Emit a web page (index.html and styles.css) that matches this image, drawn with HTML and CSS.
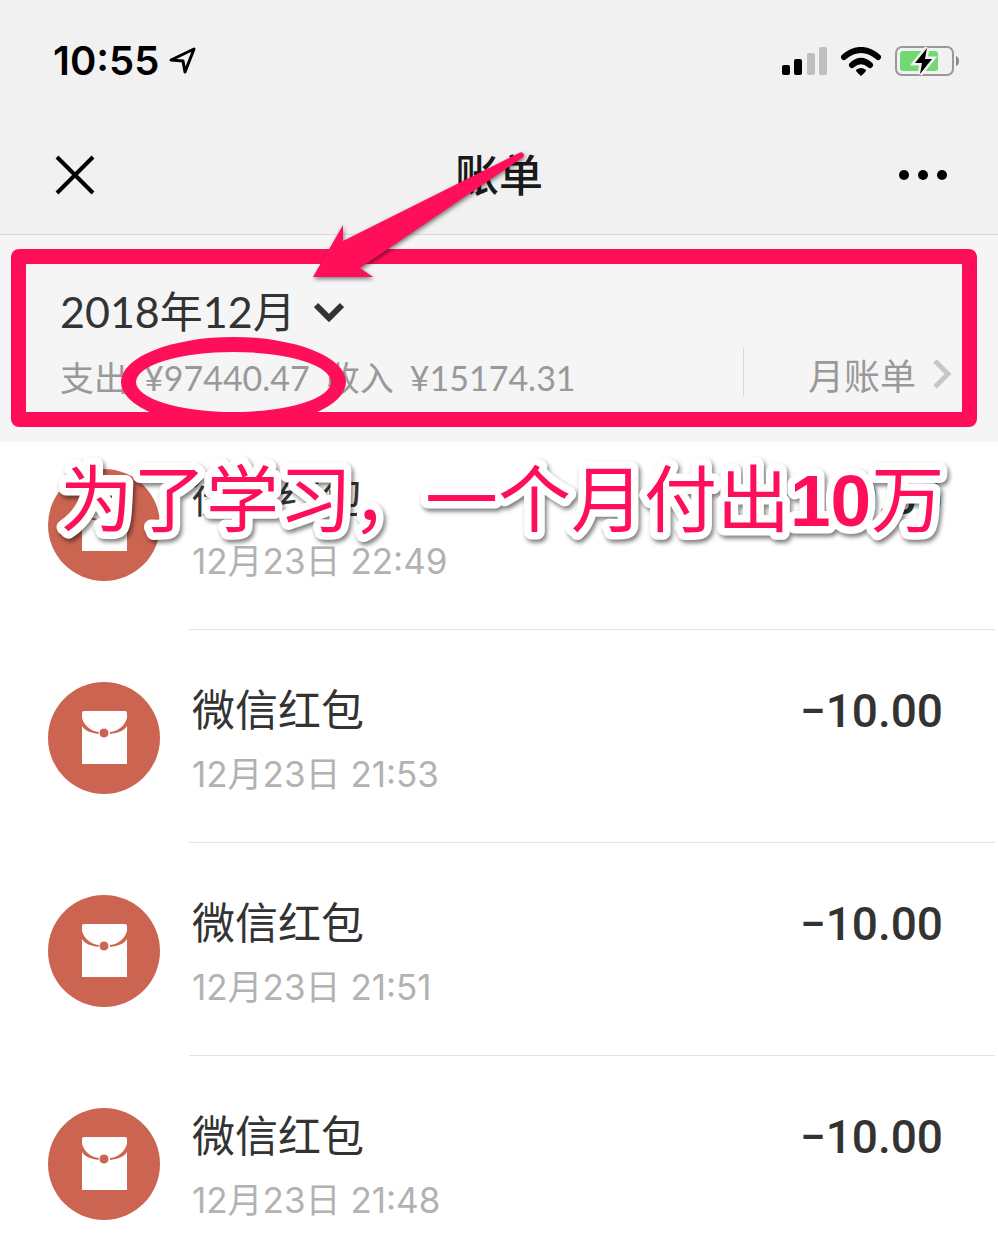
FILE: index.html
```html
<!DOCTYPE html>
<html lang="zh-CN">
<head>
    <meta charset="UTF-8">
    <meta name="viewport" content="width=device-width, initial-scale=1.0">
    <title>账单</title>
    <link rel="stylesheet" href="styles.css">
</head>
<body>
    <!-- envelope icon shared by all rows -->
    <svg class="defs" aria-hidden="true">
        <symbol id="envelope" viewBox="0 0 112 112">
            <circle cx="56" cy="56" r="56" fill="#cb6551"/>
            <path d="M36 29H77Q79 29 79 31V82H34V31Q34 29 36 29Z" fill="#fff"/>
            <path d="M34 36C36 43 42 49 51 50V52C43 51 37 49 34 44ZM79 36C77 43 71 49 62 50V52C70 51 76 49 79 44Z" fill="#cb6551"/>
            <circle cx="56" cy="51" r="5" fill="#cb6551" stroke="#fff" stroke-width="1"/>
        </symbol>
    </svg>

    <header class="header">
        <div class="status-bar">
            <div class="status-left">
                <span class="time">10:55</span>
                <svg width="28" height="28" viewBox="0 0 28 28">
                    <path d="M2 13L25 2 16 25 14 14Z" fill="none" stroke="#000" stroke-width="3" stroke-linejoin="round"/>
                </svg>
            </div>
            <div class="status-right">
                <svg width="46" height="28" viewBox="0 0 46 28">
                    <rect x="1" y="18" width="8" height="10" rx="2"/>
                    <rect x="13" y="12" width="8" height="16" rx="2"/>
                    <rect x="26" y="6" width="8" height="22" rx="2" fill="#bfbfbf"/>
                    <rect x="38" y="0" width="8" height="28" rx="2" fill="#bfbfbf"/>
                </svg>
                <svg width="40" height="29" viewBox="0 0 40 29">
                    <path d="M3 10Q20-4 37 10" fill="none" stroke="#000" stroke-width="6" stroke-linecap="round"/>
                    <path d="M11 18Q20 10 29 18" fill="none" stroke="#000" stroke-width="6" stroke-linecap="round"/>
                    <path d="M15 23Q20 19 25 23C26 24 20 29 20 29S14 24 15 23Z"/>
                </svg>
                <svg width="64" height="32" viewBox="0 0 64 32">
                    <rect x="1" y="2" width="57" height="28" rx="6" fill="none" stroke="#999" stroke-width="2"/>
                    <path d="M61 11q3 1 3 5t-3 5z" fill="#888"/>
                    <rect x="5" y="6" width="38" height="20" rx="3" fill="#73d872"/>
                    <path d="M32 3L20 18H27L25 29 37 14H30Z" stroke="#f1f1f1" stroke-width="5" paint-order="stroke"/>
                </svg>
            </div>
        </div>
        <div class="nav">
            <button class="icon-button" aria-label="关闭">
                <svg width="48" height="40" viewBox="-4 0 48 40">
                    <path d="M2 2L38 38M38 2L2 38" stroke="#000" stroke-width="4"/>
                </svg>
            </button>
            <h1>账单</h1>
            <button class="icon-button" aria-label="更多">
                <svg width="48" height="10" viewBox="0 0 48 10">
                    <circle cx="5" cy="5" r="5"/>
                    <circle cx="24" cy="5" r="5"/>
                    <circle cx="43" cy="5" r="5"/>
                </svg>
            </button>
        </div>
    </header>

    <section class="summary">
        <div>
            <button class="month">
                2018年12月
                <svg width="30" height="20" viewBox="0 0 30 20">
                    <path d="M2 3L15 16 28 3" fill="none" stroke="#333" stroke-width="6"/>
                </svg>
            </button>
            <p class="totals">
                <span>支出</span>
                <span>¥97440.47</span>
                <span>收入</span>
                <span>¥15174.31</span>
            </p>
        </div>
        <a class="month-link" href="#">
            月账单
            <svg width="20" height="32" viewBox="0 0 20 32">
                <path d="M3 3L16 16 3 29" fill="none" stroke="#c7c7c7" stroke-width="5"/>
            </svg>
        </a>

        <!-- marks drawn over the summary -->
        <div class="mark-box"></div>
        <div class="mark-circle"></div>
        <svg class="mark-arrow" width="220" height="130" viewBox="0 0 220 130">
            <path d="M2 127L32 75V91L208 3Q212 1 213 5 213 7 211 8L49 118 62 127Z" fill="#ff0f5a"/>
        </svg>
    </section>

    <main class="bills">
        <ul>
            <li>
                <svg class="avatar"><use href="#envelope"/></svg>
                <div class="bill">
                    <div class="info">
                        <h2>微信红包</h2>
                        <time>12月23日 22:49</time>
                    </div>
                    <span class="amount">−10.00</span>
                </div>
            </li>
            <li>
                <svg class="avatar"><use href="#envelope"/></svg>
                <div class="bill">
                    <div class="info">
                        <h2>微信红包</h2>
                        <time>12月23日 21:53</time>
                    </div>
                    <span class="amount">−10.00</span>
                </div>
            </li>
            <li>
                <svg class="avatar"><use href="#envelope"/></svg>
                <div class="bill">
                    <div class="info">
                        <h2>微信红包</h2>
                        <time>12月23日 21:51</time>
                    </div>
                    <span class="amount">−10.00</span>
                </div>
            </li>
            <li>
                <svg class="avatar"><use href="#envelope"/></svg>
                <div class="bill">
                    <div class="info">
                        <h2>微信红包</h2>
                        <time>12月23日 21:48</time>
                    </div>
                    <span class="amount">−10.00</span>
                </div>
            </li>
        </ul>
        <!-- svg text, for the round corners of the white outline -->
        <svg class="caption" width="920" height="120" viewBox="0 0 920 120">
            <text x="20" y="84">为了学习，一个月付出<tspan class="number">10</tspan>万</text>
        </svg>
    </main>
</body>
</html>
```
FILE: styles.css
```css
* {
    box-sizing: border-box;
}
body {
    margin: 0;
    background-color: #fff;
    color: #333;
    font-family: "Noto Sans CJK SC", sans-serif;
}
h1, h2, p, ul {
    margin: 0;
    padding: 0;
}
svg {
    display: block;
}
button {
    border: none;
    padding: 0;
    background: none;
    color: inherit;
    font-family: inherit;
    cursor: pointer;
}
.defs {
    position: absolute;
    width: 0;
    height: 0;
}
.header {
    background-color: #f1f1f1;
    border-bottom: 1px solid #d9d9d9;
}
.status-bar {
    display: flex;
    justify-content: space-between;
    align-items: center;
    height: 116px;
    padding: 6px 39px 0 53px;
}
.status-left {
    display: flex;
    align-items: center;
    gap: 10px;
}
.status-right {
    display: flex;
    align-items: center;
    gap: 14px;
}
.time {
    font-family: Inter, sans-serif;
    font-size: 40px;
    font-weight: 600;
    line-height: 48px;
    color: #000;
}
.nav {
    display: grid;
    grid-template-columns: 1fr auto 1fr;
    align-items: center;
    height: 118px;
    padding: 0 51px;
}
.icon-button:first-child {
    justify-self: start;
}
.icon-button:last-child {
    justify-self: end;
}
.nav h1 {
    padding-bottom: 4px;
    font-size: 44px;
    font-weight: 500;
    line-height: 60px;
    color: #1a1a1a;
}
.summary {
    position: relative;
    display: flex;
    justify-content: space-between;
    align-items: flex-end;
    height: 207px;
    padding: 0 46px 38px 60px;
    background-color: #f5f5f5;
}
.month {
    display: flex;
    align-items: center;
    gap: 18px;
    margin-bottom: 8px;
    font-family: Lato, "Noto Sans CJK SC", sans-serif;
    font-size: 43px;
    line-height: 64px;
}
.totals {
    display: flex;
    gap: 16px;
    font-family: Lato, "Noto Sans CJK SC", sans-serif;
    font-size: 34px;
    line-height: 52px;
    color: #999;
}
.month-link {
    display: flex;
    align-items: center;
    gap: 16px;
    height: 48px;
    margin-bottom: 8px;
    padding: 4px 0 0 64px;
    border-left: 1px solid #d9d9d9;
    font-size: 36px;
    color: #999;
    text-decoration: none;
}
.mark-box {
    position: absolute;
    top: 14px;
    left: 11px;
    right: 21px;
    bottom: 15px;
    border: 15px solid #ff0f5a;
    border-radius: 8px;
}
.mark-circle {
    position: absolute;
    top: 102px;
    left: 121px;
    width: 225px;
    height: 90px;
    border: 15px solid #ff0f5a;
    border-radius: 50%;
}
.mark-arrow {
    position: absolute;
    top: -85px;
    left: 311px;
    filter: drop-shadow(1px 2px 2px rgba(0, 0, 0, 0.5));
}
.bills {
    position: relative;
}
.bills ul {
    list-style: none;
}
.bills li {
    display: flex;
    gap: 29px;
    padding-left: 48px;
}
.avatar {
    flex: none;
    width: 112px;
    height: 112px;
    margin-top: 52px;
}
.bill {
    flex: 1;
    display: flex;
    justify-content: space-between;
    height: 213px;
    margin-right: 3px;
    padding: 52px 52px 0 3px;
    border-bottom: 1px solid #e2e2e2;
}
.bills li:first-child .avatar {
    margin-top: 27px;
}
.bills li:first-child .bill {
    height: 188px;
    padding-top: 27px;
}
.bills li:last-child .bill {
    height: 200px;
    border-bottom: none;
}
.info h2 {
    font-size: 43px;
    font-weight: 400;
    line-height: 50px;
}
.info time {
    display: block;
    margin-top: 14px;
    font-family: Inter, "Noto Sans CJK SC", sans-serif;
    font-size: 35px;
    line-height: 56px;
    color: #b2b2b2;
}
.amount {
    font-family: Roboto, sans-serif;
    font-size: 46px;
    font-weight: 500;
    line-height: 58px;
}
.caption {
    position: absolute;
    top: 0;
    left: 40px;
    filter: drop-shadow(2px 3px 2px rgba(0, 0, 0, 0.5));
}
.caption text {
    font-size: 73px;
    font-weight: 400;
    fill: #ff0f5a;
    stroke: #fff;
    stroke-width: 15px;
    stroke-linejoin: round;
    paint-order: stroke;
}
.caption .number {
    font-family: "Liberation Sans", sans-serif;
    font-weight: 700;
}
```
